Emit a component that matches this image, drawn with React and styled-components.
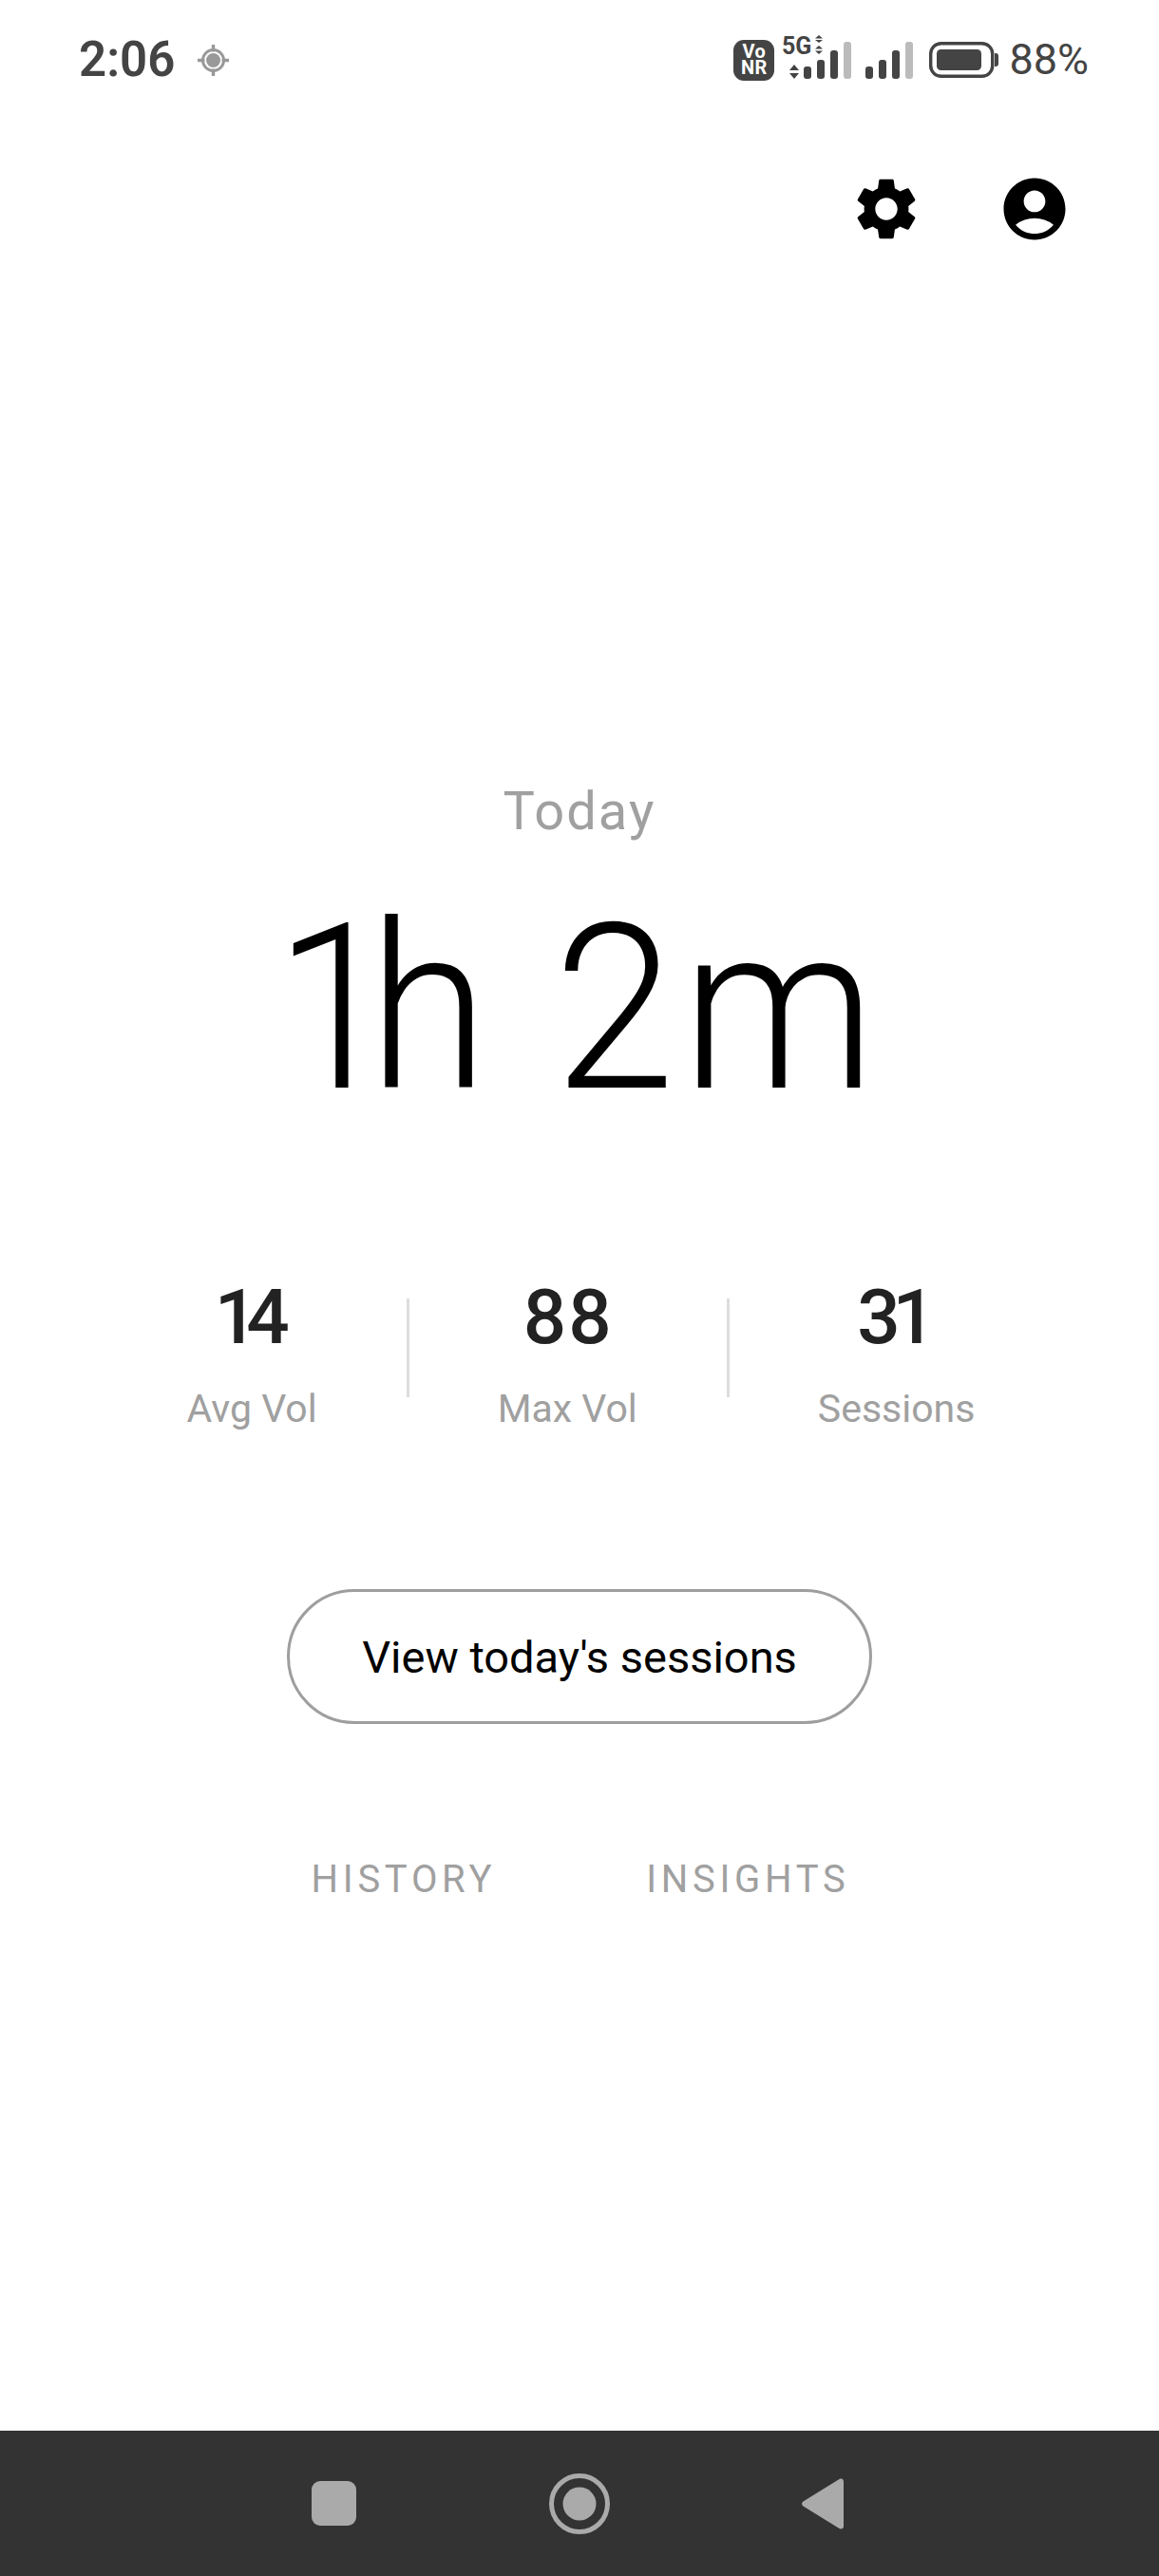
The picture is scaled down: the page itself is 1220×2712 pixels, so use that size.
import React from 'react';
import styled, { createGlobalStyle } from 'styled-components';
import { MdSettings, MdAccountCircle } from 'react-icons/md';

const Global = createGlobalStyle`
  html, body {
    margin: 0;
    padding: 0;
    background: #ffffff;
    font-family: Roboto, "Noto Sans", sans-serif;
  }
`;

const Page = styled.div`
  width: 1220px;
  height: 2712px;
  display: flex;
  flex-direction: column;
  overflow: hidden;
  background: #ffffff;
`;

const StatusBar = styled.div`
  height: 126px;
  padding: 0 74px 0 83px;
  display: flex;
  align-items: center;
  justify-content: space-between;
  color: #444444;
`;

const StatusLeft = styled.div`
  display: flex;
  align-items: center;
  gap: 24px;
`;

const Clock = styled.span`
  font-size: 51px;
  font-weight: 600;
  line-height: 60px;
`;

const StatusRight = styled.div`
  display: flex;
  align-items: center;
`;

const VoNrBadge = styled.div`
  width: 43px;
  height: 43px;
  margin-right: 8px;
  border-radius: 11px;
  background: #444444;
  color: #ffffff;
  font-size: 20px;
  font-weight: 700;
  letter-spacing: 0.5px;
  line-height: 17px;
  display: flex;
  flex-direction: column;
  align-items: center;
  justify-content: center;
`;

const BatteryText = styled.span`
  margin-left: 11px;
  font-size: 45px;
  line-height: 48px;
`;

const Toolbar = styled.div`
  height: 80px;
  margin-top: 54px;
  padding-right: 92px;
  display: flex;
  justify-content: flex-end;
  align-items: center;
  gap: 78px;
  font-size: 78px;
  color: #000000;
  svg {
    display: block;
  }
`;

const Summary = styled.main`
  padding-top: 561px;
  display: flex;
  flex-direction: column;
  align-items: center;
`;

const Today = styled.div`
  font-size: 56px;
  line-height: 66px;
  letter-spacing: 2px;
  color: #a0a0a0;
`;

const Duration = styled.div`
  margin-top: 33px;
  padding-right: 10px;
  font-size: 243px;
  font-weight: 300;
  line-height: 285px;
  word-spacing: 14px;
  color: #000000;
  transform: scaleX(0.945);
  white-space: nowrap;
`;

// roboto spaces these digits differently from the reference
const Kerned = styled.span`
  letter-spacing: ${(p) => p.$by}px;
`;

const Stats = styled.div`
  margin-top: 135px;
  padding-left: 3px;
  display: flex;
  align-items: flex-start;
`;

const Stat = styled.div`
  position: relative;
  padding: 0 95px;
  display: flex;
  flex-direction: column;
  align-items: center;
  & + &::before {
    content: '';
    position: absolute;
    left: -1px;
    top: 27px;
    width: 3px;
    height: 104px;
    background: #dddddd;
  }
`;

const StatValue = styled.div`
  font-size: 80px;
  font-weight: 500;
  line-height: 94px;
  color: #222222;
  letter-spacing: ${(p) => p.$spacing}px;
  margin-right: ${(p) => -p.$spacing}px;
`;

const StatLabel = styled.div`
  margin-top: 24px;
  font-size: 41px;
  line-height: 50px;
  color: #a0a0a0;
`;

const SessionsButton = styled.button`
  width: 616px;
  height: 142px;
  margin-top: 165px;
  border: 3px solid #9e9e9e;
  border-radius: 71px;
  background: #ffffff;
  color: #000000;
  font-family: inherit;
  font-size: 47px;
`;

const Links = styled.div`
  margin-top: 140px;
  padding-left: 2px;
  display: flex;
  gap: 158px;
`;

const LinkItem = styled.a`
  font-size: 40px;
  line-height: 48px;
  letter-spacing: 4.7px;
  color: #a0a0a0;
`;

const NavBar = styled.nav`
  height: 153px;
  margin-top: auto;
  background: #333333;
  padding: 0 332px 0 328px;
  display: flex;
  align-items: center;
  justify-content: space-between;
`;

const NavSquare = styled.div`
  width: 47px;
  height: 47px;
  border-radius: 9px;
  background: #aaaaaa;
`;

const LocationIcon = () => (
  <svg width="33" height="33" viewBox="0 0 33 33">
    <circle cx="16.5" cy="16.5" r="11" fill="none" stroke="#999" strokeWidth="3" />
    <circle cx="16.5" cy="16.5" r="7.5" fill="#999" />
    <path d="M16.5 0v6M16.5 27v6M0 16.5h6M27 16.5h6" stroke="#999" strokeWidth="3.4" strokeLinecap="round" />
  </svg>
);

const Bars = ({ x }) => (
  <g fill="#444">
    <rect x={x} y="33" width="8" height="13" rx="3" />
    <rect x={x + 14} y="26" width="8" height="20" rx="3" />
    <rect x={x + 28} y="16" width="8" height="30" rx="3" />
    <rect x={x + 42} y="7" width="8" height="39" rx="3" fill="#bbb" />
  </g>
);

const Signal5G = () => (
  <svg width="73" height="46" viewBox="0 0 73 46" style={{ marginRight: 15, marginTop: -7, overflow: 'visible' }}>
    <text x="0" y="20" fontFamily="Roboto" fontSize="25" fontWeight="700" fill="#444">5G</text>
    <path d="M39 0l-4 3.500h8zM39 8l-4-3h8zM39 11l-4 3.500h8zM39 20l-4-3.500h8z" fill="#444" />
    <path d="M13 31l-5 6h10zM13 46l-5-6h10z" fill="#444" />
    <Bars x={23} />
  </svg>
);

const SignalPlain = () => (
  <svg width="50" height="39" viewBox="0 7 50 39" style={{ marginRight: 17 }}>
    <Bars x={0} />
  </svg>
);

const Battery = () => (
  <svg width="73" height="38" viewBox="0 0 73 38">
    <rect x="1.700" y="1.700" width="65" height="34.600" rx="11" fill="none" stroke="#444" strokeWidth="3.400" />
    <rect x="8" y="8" width="47" height="22" rx="4.500" fill="#444" />
    <path d="M69 12h1c2 0 3 1 3 3v8c0 2-1 3-3 3h-1z" fill="#444" />
  </svg>
);

const NavHome = () => (
  <svg width="64" height="64" viewBox="0 0 64 64">
    <circle cx="32" cy="32" r="29.500" fill="none" stroke="#aaa" strokeWidth="5" />
    <circle cx="32" cy="32" r="17.500" fill="#aaa" />
  </svg>
);

const NavBack = () => (
  <svg width="44" height="54" viewBox="0 0 44 54">
    <path d="M1.500 24.500L39.500 1c2-1.200 4.500 0 4.500 2.500v47c0 2.500-2.500 3.700-4.500 2.500L1.500 29.500c-2-1.500-2-3.500 0-5z" fill="#aaa" />
  </svg>
);

export default function App() {
  return (
    <Page>
      <Global />
      <StatusBar>
        <StatusLeft>
          <Clock>2:06</Clock>
          <LocationIcon />
        </StatusLeft>
        <StatusRight>
          <VoNrBadge>
            <span>Vo</span>
            <span>NR</span>
          </VoNrBadge>
          <Signal5G />
          <SignalPlain />
          <Battery />
          <BatteryText>88%</BatteryText>
        </StatusRight>
      </StatusBar>
      <Toolbar>
        <MdSettings />
        <MdAccountCircle />
      </Toolbar>
      <Summary>
        <Today>Today</Today>
        <Duration>
          <Kerned $by={-30}>1</Kerned>h <Kerned $by={8}>2</Kerned>m
        </Duration>
        <Stats>
          <Stat>
            <StatValue $spacing={-12}>14</StatValue>
            <StatLabel>Avg Vol</StatLabel>
          </Stat>
          <Stat>
            <StatValue $spacing={2}>88</StatValue>
            <StatLabel>Max Vol</StatLabel>
          </Stat>
          <Stat>
            <StatValue $spacing={-8}>31</StatValue>
            <StatLabel>Sessions</StatLabel>
          </Stat>
        </Stats>
        <SessionsButton>View today's sessions</SessionsButton>
        <Links>
          <LinkItem>HISTORY</LinkItem>
          <LinkItem>INSIGHTS</LinkItem>
        </Links>
      </Summary>
      <NavBar>
        <NavSquare />
        <NavHome />
        <NavBack />
      </NavBar>
    </Page>
  );
}
